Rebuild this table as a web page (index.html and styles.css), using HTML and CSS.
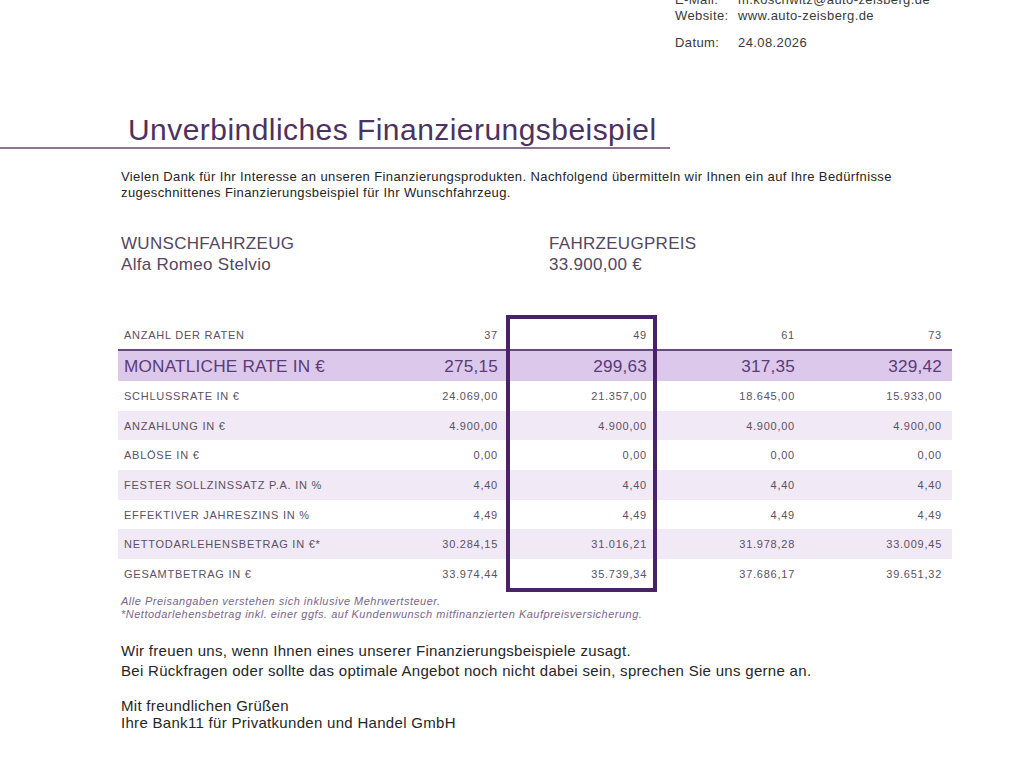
FILE: index.html
```html
<!DOCTYPE html>
<html lang="de">
<head>
<meta charset="utf-8">
<title>Unverbindliches Finanzierungsbeispiel</title>
<link rel="stylesheet" href="styles.css">
</head>
<body>
<div class="page">
  <div class="contact">
    <span class="k">E-Mail:</span><span class="v">m.koschwitz@auto-zeisberg.de</span>
    <span class="k">Website:</span><span class="v">www.auto-zeisberg.de</span>
    <span class="k date">Datum:</span><span class="v date">24.08.2026</span>
  </div>

  <h1 class="title">Unverbindliches Finanzierungsbeispiel</h1>

  <p class="intro">Vielen Dank für Ihr Interesse an unseren Finanzierungsprodukten. Nachfolgend übermitteln wir Ihnen ein auf Ihre Bedürfnisse zugeschnittenes Finanzierungsbeispiel für Ihr Wunschfahrzeug.</p>

  <div class="facts">
    <div class="fact wish">
      <div class="fact-label">WUNSCHFAHRZEUG</div>
      <div class="fact-value">Alfa Romeo Stelvio</div>
    </div>
    <div class="fact">
      <div class="fact-label">FAHRZEUGPREIS</div>
      <div class="fact-value">33.900,00 €</div>
    </div>
  </div>

  <div class="table-wrap">
    <table class="rates">
      <colgroup>
        <col class="c-label"><col class="c-val"><col class="c-val c2"><col class="c-val"><col class="c-val c4">
      </colgroup>
      <tr class="r-count">
        <th>ANZAHL DER RATEN</th><td>37</td><td>49</td><td>61</td><td>73</td>
      </tr>
      <tr class="r-main">
        <th>MONATLICHE RATE IN €</th><td>275,15</td><td>299,63</td><td>317,35</td><td>329,42</td>
      </tr>
      <tr>
        <th>SCHLUSSRATE IN €</th><td>24.069,00</td><td>21.357,00</td><td>18.645,00</td><td>15.933,00</td>
      </tr>
      <tr class="alt">
        <th>ANZAHLUNG IN €</th><td>4.900,00</td><td>4.900,00</td><td>4.900,00</td><td>4.900,00</td>
      </tr>
      <tr>
        <th>ABLÖSE IN €</th><td>0,00</td><td>0,00</td><td>0,00</td><td>0,00</td>
      </tr>
      <tr class="alt">
        <th>FESTER SOLLZINSSATZ P.A. IN %</th><td>4,40</td><td>4,40</td><td>4,40</td><td>4,40</td>
      </tr>
      <tr>
        <th>EFFEKTIVER JAHRESZINS IN %</th><td>4,49</td><td>4,49</td><td>4,49</td><td>4,49</td>
      </tr>
      <tr class="alt">
        <th>NETTODARLEHENSBETRAG IN €*</th><td>30.284,15</td><td>31.016,21</td><td>31.978,28</td><td>33.009,45</td>
      </tr>
      <tr>
        <th>GESAMTBETRAG IN €</th><td>33.974,44</td><td>35.739,34</td><td>37.686,17</td><td>39.651,32</td>
      </tr>
    </table>
    <div class="highlight"></div>
  </div>

  <div class="notes">
    <p>Alle Preisangaben verstehen sich inklusive Mehrwertsteuer.</p>
    <p>*Nettodarlehensbetrag inkl. einer ggfs. auf Kundenwunsch mitfinanzierten Kaufpreisversicherung.</p>
  </div>

  <div class="closing">
    <p>Wir freuen uns, wenn Ihnen eines unserer Finanzierungsbeispiele zusagt.<br>Bei Rückfragen oder sollte das optimale Angebot noch nicht dabei sein, sprechen Sie uns gerne an.</p>
    <p class="regards">Mit freundlichen Grüßen<br>Ihre Bank11 für Privatkunden und Handel GmbH</p>
  </div>
</div>
</body>
</html>
```

FILE: styles.css
```css
html, body {
  margin: 0;
  padding: 0;
  background: #ffffff;
}

body {
  font-family: "Liberation Sans", Arial, sans-serif;
  color: #2a2a2a;
  overflow: hidden;
}

.page {
  width: 1024px;
  height: 768px;
  overflow: hidden;
}

/* contact block top right */
.contact {
  display: grid;
  grid-template-columns: 63px auto;
  margin: -8px 0 0 675px;
  font-size: 13px;
  letter-spacing: 0.4px;
  line-height: 16px;
  color: #3a3a3a;
}
.contact .date {
  margin-top: 11px;
}

/* title */
.title {
  width: 542px;
  margin: 62px 0 0 0;
  padding: 0 0 0 128px;
  border-bottom: 2px solid #8d7292;
  font-weight: normal;
  font-size: 30px;
  letter-spacing: 0.45px;
  line-height: 34px;
  color: #4d3260;
}

.intro {
  margin: 20px 0 0 121px;
  width: 800px;
  font-size: 13px;
  letter-spacing: 0.4px;
  line-height: 16px;
  color: #242424;
}

.facts {
  display: flex;
  margin: 32px 0 0 121px;
  color: #54475e;
  font-size: 17px;
  letter-spacing: 0.3px;
  line-height: 21px;
}
.fact.wish {
  width: 428px;
}

/* table */
.table-wrap {
  position: relative;
  margin: 40px 0 0 118px;
  width: 834px;
}
.rates {
  border-collapse: collapse;
  table-layout: fixed;
  width: 834px;
}
.c-label { width: 242px; }
.c-val { width: 148px; }
.c2 { width: 149px; }
.c4 { width: 147px; }

.rates th,
.rates td {
  padding: 0 10px 0 6px;
  height: 29.7px;
  font-size: 11px;
  letter-spacing: 0.75px;
  color: #5b5064;
  font-weight: normal;
  vertical-align: middle;
  white-space: nowrap;
}
.rates th {
  text-align: left;
}
.rates td {
  text-align: right;
}
.rates tr.alt th,
.rates tr.alt td {
  background: #f1e9f6;
}

.rates tr.r-count th,
.rates tr.r-count td {
  height: 35px;
  vertical-align: bottom;
  padding-bottom: 8px;
  box-sizing: border-box;
}
.rates tr.r-main th,
.rates tr.r-main td {
  height: 30px;
  background: #dcc8ea;
  border-top: 2px solid #674a82;
  font-size: 17.2px;
  letter-spacing: 0.2px;
  color: #5a3b78;
}

.highlight {
  position: absolute;
  left: 388px;
  top: 0;
  width: 143px;
  height: 269px;
  border: 4px solid #4a2268;
}

/* notes */
.notes {
  margin: 6px 0 0 121px;
  font-size: 11px;
  letter-spacing: 0.5px;
  line-height: 13px;
  font-style: italic;
  color: #7a6689;
}
.notes p {
  margin: 0;
}

/* closing */
.closing {
  margin: 20px 0 0 121px;
  font-size: 15px;
  letter-spacing: 0.3px;
  color: #262626;
}
.closing p {
  margin: 0;
  line-height: 20px;
}
.closing .regards {
  margin-top: 16px;
  line-height: 17px;
}
```
